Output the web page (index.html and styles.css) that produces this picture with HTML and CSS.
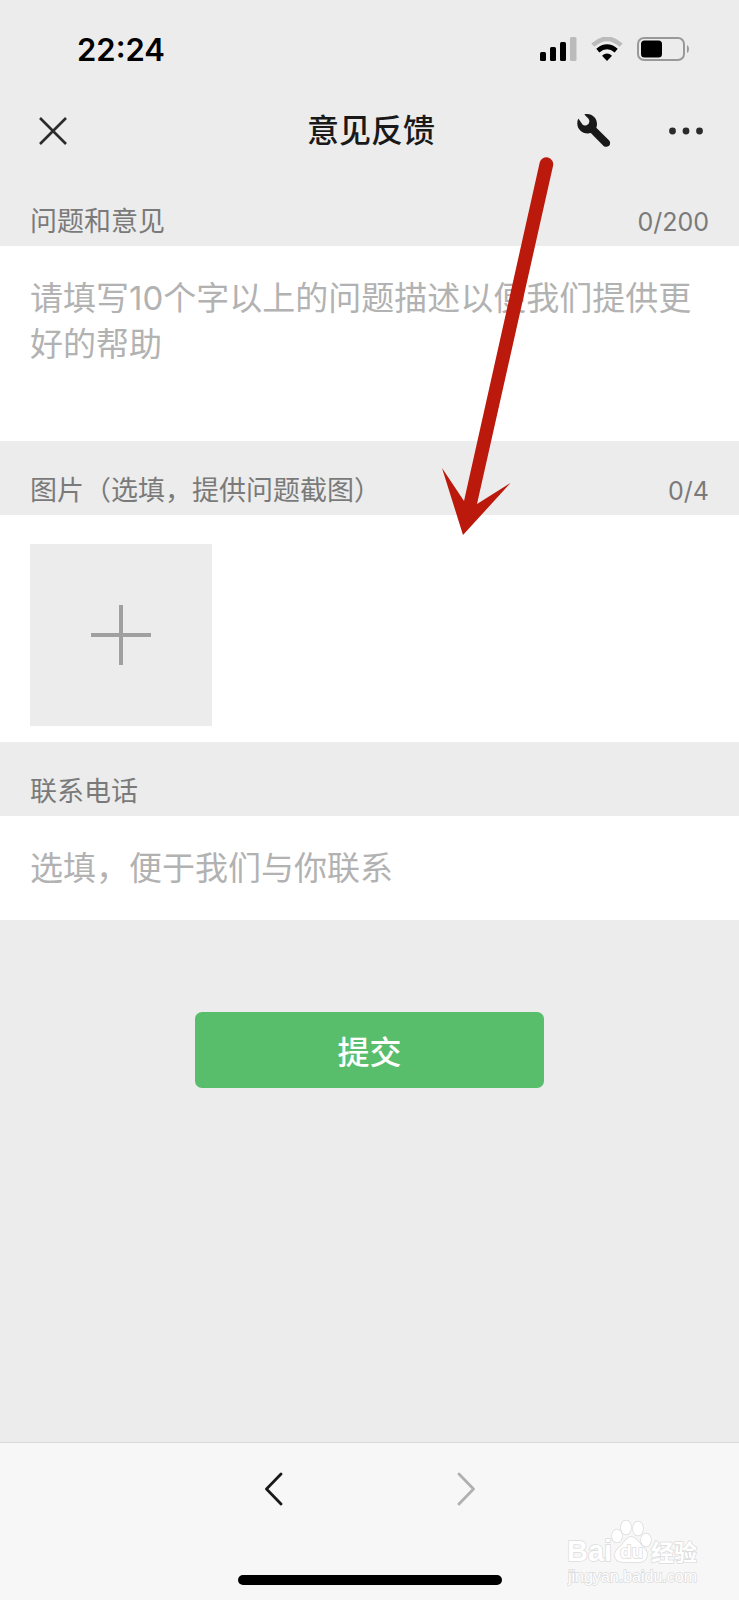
FILE: index.html
```html
<!DOCTYPE html>
<html lang="zh-CN">
<head>
<meta charset="utf-8">
<meta name="viewport" content="width=device-width, initial-scale=1">
<title>意见反馈</title>
<link rel="stylesheet" href="styles.css">
</head>
<body>
<div class="page">
  <header class="top">
    <div class="status">
      <time class="clock">22:24</time>
      <div class="status-icons">
        <svg width="37" height="24" viewBox="0 0 37 24" aria-hidden="true">
          <rect x="0" y="15" width="6" height="9" rx="1.5"/>
          <rect x="10" y="10" width="6" height="14" rx="1.5"/>
          <rect x="20" y="5" width="6" height="19" rx="1.5"/>
          <rect x="30" y="0" width="6.500" height="24" rx="1.5" fill="#bbb"/>
        </svg>
        <svg width="32" height="24" viewBox="0 0 32 24" aria-hidden="true">
          <path d="M1.800 8.200Q16-4.600 30.200 8.200" fill="none" stroke="#bbb" stroke-width="4.500"/>
          <path d="M6.800 13.600Q16 6 25.200 13.600" fill="none" stroke="#000" stroke-width="4.800"/>
          <path d="M11 18.800Q16 14 21 18.800L16 24Z"/>
        </svg>
        <svg width="53" height="24" viewBox="0 0 53 24" aria-hidden="true">
          <rect x="1" y="1" width="46" height="22" rx="6" fill="none" stroke="#999" stroke-width="2"/>
          <rect x="4" y="3.500" width="21" height="17" rx="3.500"/>
          <path d="M50 8Q52 9 52 12T50 16Z" fill="#999"/>
        </svg>
      </div>
    </div>
    <div class="nav">
      <button class="icon-button" type="button" aria-label="关闭">
        <svg width="28" height="28" viewBox="0 0 28 28" fill="none" stroke="#2b2b2b" stroke-width="2.600"><path d="M1 1L27 27M27 1L1 27"/></svg>
      </button>
      <h1 class="title">意见反馈</h1>
      <div class="nav-actions">
        <button class="icon-button" type="button" aria-label="工具">
          <svg width="34" height="34" viewBox="0 0 34 34" fill="#191919"><path d="M7.300.500C14-1.400 20 3.500 20 10Q20 12 19.300 13.700L32.200 26.500Q34 28.600 32.400 31.400Q29.400 34 26.600 32L13.800 19.100C6.500 21 .300 16 .300 9.500Q.300 6.500 1.300 4.500L5.500 10.500Q7 12 9.500 11.300T12.300 8Q12.500 6 11.500 4.700Z"/></svg>
        </button>
        <button class="icon-button" type="button" aria-label="更多">
          <svg width="34" height="8" viewBox="0 0 34 8" fill="#2b2b2b"><circle cx="3.500" cy="4" r="3.400"/><circle cx="17" cy="4" r="3.400"/><circle cx="30.500" cy="4" r="3.400"/></svg>
        </button>
      </div>
    </div>
  </header>

  <form class="form">
    <div class="section-head">
      <label for="problem">问题和意见</label>
      <span class="count">0/200</span>
    </div>
    <textarea class="field field-long" id="problem" maxlength="200" placeholder="请填写10个字以上的问题描述以便我们提供更好的帮助"></textarea>

    <div class="section-head">
      <span>图片（选填，提供问题截图）</span>
      <span class="count">0/4</span>
    </div>
    <div class="pictures">
      <button class="add" type="button" aria-label="添加图片">
        <svg width="60" height="60" viewBox="0 0 60 60" stroke="#a0a0a0" stroke-width="4"><path d="M0 30H60M30 0V60"/></svg>
      </button>
    </div>

    <div class="section-head">
      <label for="phone">联系电话</label>
    </div>
    <input class="field" id="phone" type="tel" placeholder="选填，便于我们与你联系">

    <button class="submit" type="submit">提交</button>
  </form>

  <footer class="bottom">
    <nav class="history">
      <button class="icon-button" type="button" aria-label="后退">
        <svg width="18" height="34" viewBox="0 0 18 34" fill="none" stroke="#191919" stroke-width="2.800" stroke-linecap="round" stroke-linejoin="round"><path d="M16 2L1.500 17L16 32"/></svg>
      </button>
      <button class="icon-button" type="button" aria-label="前进">
        <svg width="18" height="34" viewBox="0 0 18 34" fill="none" stroke="#b0b0b0" stroke-width="2.800" stroke-linecap="round" stroke-linejoin="round"><path d="M2 2L16.500 17L2 32"/></svg>
      </button>
    </nav>
    <div class="home-bar"></div>
    <svg class="watermark" width="136" height="66" viewBox="0 0 136 66" aria-label="Baidu 经验">
      <g class="mark">
        <text x="0" y="41" font-size="29" font-weight="700">Bai</text>
        <ellipse cx="50" cy="16" rx="5" ry="6.500"/>
        <ellipse cx="59" cy="7.500" rx="5" ry="7"/>
        <ellipse cx="71" cy="8.500" rx="5" ry="7"/>
        <ellipse cx="79" cy="20" rx="5" ry="6.500"/>
        <path d="M64 17Q69 17 74 25Q81 31 80 36Q78 43 70 42H56Q48 42 48 35Q48 30 55 25Q60 17 64 17Z"/>
        <text x="53" y="38" font-size="19" font-weight="700">du</text>
        <text x="84" y="41" font-size="23" font-weight="700">经验</text>
        <text x="1" y="62" font-size="16">jingyan.baidu.com</text>
      </g>
    </svg>
  </footer>

  <svg class="arrow" width="69" height="378" viewBox="0 0 69 378" aria-hidden="true">
    <path d="M97.700 4.500A6.700 6.700 0 0 1 111 8L35 346L68.500 325L21 377L0 310L22 343Z"/>
  </svg>
</div>
</body>
</html>
```
FILE: styles.css
```css
* {
  box-sizing: border-box;
}

body {
  margin: 0;
  background: #ececec;
  color: #191919;
  font-family: Inter, "Noto Sans CJK SC", sans-serif;
}

button,
input,
textarea {
  margin: 0;
  border: 0;
  border-radius: 0;
  font: inherit;
}

svg {
  display: block;
}

.page {
  position: relative;
  display: flex;
  flex-direction: column;
  min-height: 100vh;
}

.status {
  display: flex;
  align-items: center;
  justify-content: space-between;
  height: 98px;
  padding: 0 49px 0 77px;
}

.clock {
  color: #000;
  font-size: 31px;
  font-weight: 600;
}

.status-icons {
  display: flex;
  gap: 14px;
}

.nav {
  display: grid;
  grid-template-columns: 1fr auto 1fr;
  align-items: center;
  height: 66px;
  padding: 0 36px 0 39px;
}

.title {
  margin: 0;
  font-size: 32px;
  font-weight: 500;
  line-height: 48px;
}

.nav-actions {
  display: flex;
  align-items: center;
  justify-content: flex-end;
  gap: 58px;
}

.icon-button {
  display: flex;
  align-items: center;
  justify-self: start;
  padding: 0;
  background: none;
}

.form {
  display: flex;
  flex-direction: column;
  flex: 1;
  padding-top: 8px;
}

.section-head {
  display: flex;
  justify-content: space-between;
  padding: 31px 30px 5px;
  color: #7a7a7a;
  font-size: 27px;
  line-height: 38px;
}

.count {
  font-size: 25px;
}

.field {
  display: block;
  width: 100%;
  height: 104px;
  padding: 29px 30px;
  outline: 0;
  background: #fff;
  color: #191919;
  font-size: 33px;
  line-height: 46px;
}

.field-long {
  height: 195px;
  resize: none;
}

.field::placeholder {
  color: #b2b2b2;
  opacity: 1;
}

.pictures {
  display: flex;
  padding: 29px 30px 16px;
  background: #fff;
}

.add {
  display: grid;
  place-items: center;
  width: 182px;
  height: 182px;
  padding: 0;
  background: #ececec;
}

.submit {
  align-self: center;
  width: 349px;
  max-width: 90%;
  height: 76px;
  margin: 92px 0;
  border-radius: 7px;
  background: #59be6c;
  color: #fff;
  font-size: 32px;
  font-weight: 500;
}

.bottom {
  position: relative;
  display: flex;
  flex-direction: column;
  align-items: center;
  justify-content: space-between;
  height: 158px;
  padding: 29px 0 15px;
  border-top: 1px solid #d8d8d8;
  background: #f7f7f7;
}

.history {
  display: flex;
  gap: 174px;
}

.home-bar {
  width: 264px;
  height: 10px;
  border-radius: 5px;
  background: #000;
}

.watermark {
  position: absolute;
  right: 36px;
  bottom: 14px;
}

.mark {
  fill: #fff;
  font-family: "Liberation Sans", "Noto Sans CJK SC", sans-serif;
  stroke: #dcdcdc;
  stroke-width: 1.5px;
  paint-order: stroke;
}

.arrow {
  position: absolute;
  top: 158px;
  left: 442px;
  overflow: visible;
  fill: #bb190b;
  pointer-events: none;
}
```
